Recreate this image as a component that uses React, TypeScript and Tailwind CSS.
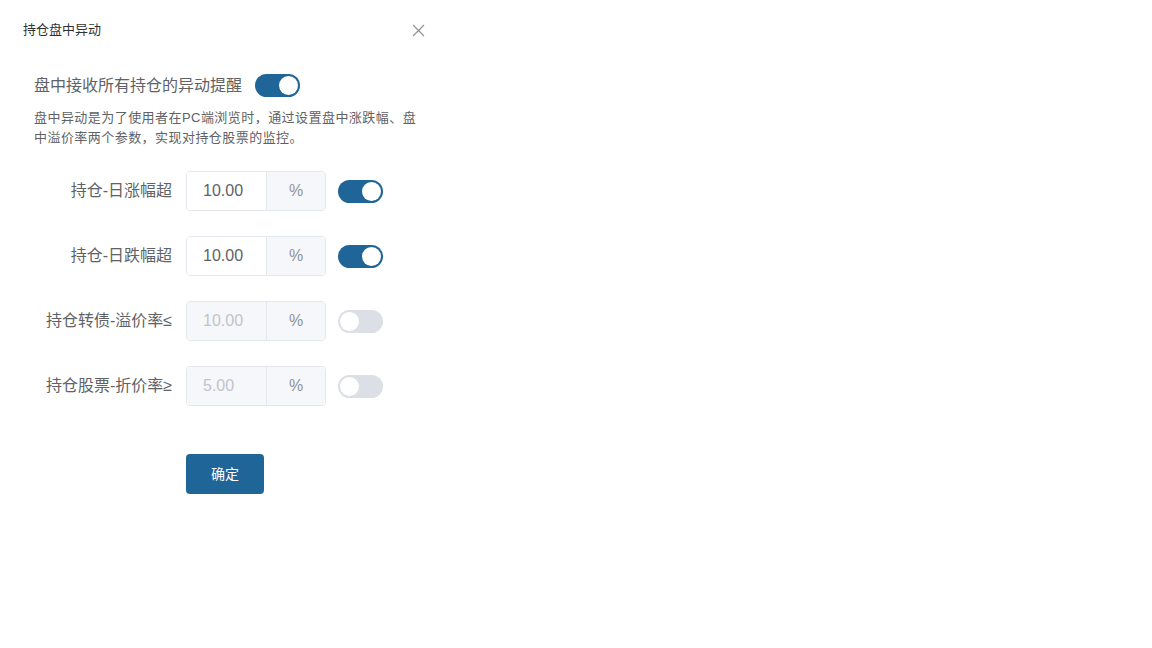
import React from "react";

const Toggle = ({ on }: { on: boolean }) => (
  <div
    className={`relative w-[45px] h-[23px] rounded-full ${on ? "bg-[#1f6598]" : "bg-[#dcdfe6]"}`}
  >
    <div
      className={`absolute top-[2px] w-[19px] h-[19px] rounded-full bg-white ${on ? "right-[2px]" : "left-[2px]"}`}
    />
  </div>
);

const Row = ({ label, value, on }: { label: string; value: string; on: boolean }) => (
  <div className="flex items-center h-[40px] mb-[25px]">
    <div className="w-[138px] text-right text-[16px] text-[#606266] whitespace-nowrap">{label}</div>
    <div className="ml-[14px] flex h-[40px] w-[140px] rounded-[4px] border border-[#e4e7ed] overflow-hidden">
      <div
        className={`w-[79px] h-full flex items-center pl-[16px] text-[16px] ${on ? "bg-white text-[#606266]" : "bg-[#f5f7fa] text-[#c0c4cc]"}`}
      >
        {value}
      </div>
      <div className="flex-1 h-full flex items-center justify-center bg-[#f5f7fa] border-l border-[#e4e7ed] text-[16px] text-[#909399]">
        %
      </div>
    </div>
    <div className="ml-[12px]">
      <Toggle on={on} />
    </div>
  </div>
);

export default function App() {
  return (
    <div
      className="w-[1152px] h-[648px] bg-white"
      style={{ fontFamily: '"Liberation Sans", "Noto Sans CJK SC", sans-serif' }}
    >
      <div className="w-[440px]">
        <div className="flex items-center justify-between h-[60px] pl-[23px] pr-[15px]">
          <div className="text-[13px] text-[#303133]">持仓盘中异动</div>
          <svg width="13" height="13" viewBox="0 0 13 13" className="text-[#909399]">
            <path d="M1 1 L12 12 M12 1 L1 12" stroke="currentColor" strokeWidth="1.2" fill="none" />
          </svg>
        </div>
        <div className="pl-[34px] pr-[20px]">
          <div className="flex items-center h-[23px] mt-[14px]">
            <span className="text-[16px] text-[#606266] leading-none">盘中接收所有持仓的异动提醒</span>
            <div className="ml-[13px]">
              <Toggle on={true} />
            </div>
          </div>
          <div className="mt-[11px] text-[13px] leading-[20px] text-[#606266] tracking-[0.45px] whitespace-nowrap">
            盘中异动是为了使用者在PC端浏览时，通过设置盘中涨跌幅、盘
            <br />
            中溢价率两个参数，实现对持仓股票的监控。
          </div>
          <div className="mt-[23px]">
            <Row label="持仓-日涨幅超" value="10.00" on={true} />
            <Row label="持仓-日跌幅超" value="10.00" on={true} />
            <Row label="持仓转债-溢价率≤" value="10.00" on={false} />
            <Row label="持仓股票-折价率≥" value="5.00" on={false} />
          </div>
          <div className="ml-[152px] mt-[48px]">
            <button className="w-[78px] h-[40px] rounded-[4px] bg-[#1f6598] text-white text-[14px]">
              确定
            </button>
          </div>
        </div>
      </div>
    </div>
  );
}
